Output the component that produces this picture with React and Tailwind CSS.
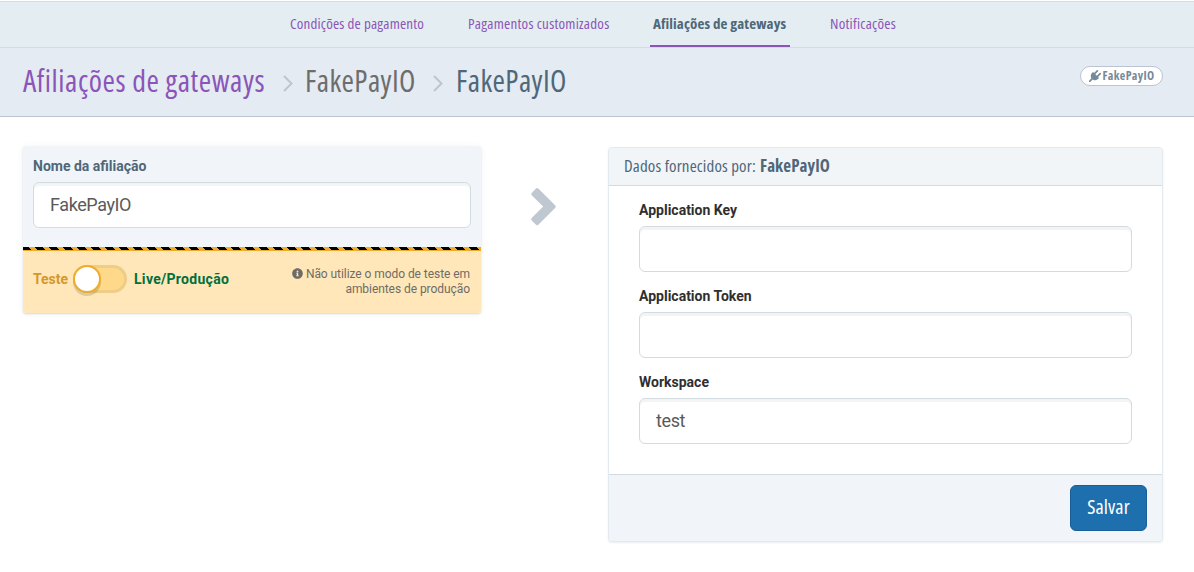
import { FaInfoCircle } from 'react-icons/fa';

const tabs = [
  { label: 'Condições de pagamento', width: 'w-[140px]', spacing: 'tracking-[0.18px]' },
  { label: 'Pagamentos customizados', width: 'w-[147px]', spacing: 'tracking-[0.25px]' },
  { label: 'Afiliações de gateways', width: 'w-[140px]', spacing: 'tracking-[0.11px]', active: true },
  { label: 'Notificações', width: '-ml-px w-[72px]', spacing: 'tracking-[0.25px]' },
];

function Tabs() {
  return (
    <nav className="flex h-[47px] justify-center gap-[38px] border-y border-[#d3dcdf] bg-[#e4edf1] pr-[8px] text-[15px] leading-[42px]">
      {tabs.map((tab) => (
        <a
          key={tab.label}
          className={`${tab.width} ${tab.spacing} h-[45px] whitespace-nowrap px-[3px] ${
            tab.active ? 'border-b-2 border-[#8b55b8] font-bold text-[#4f6778]' : 'text-[#8b55b8]'
          }`}
        >
          {tab.label}
        </a>
      ))}
    </nav>
  );
}

function Separator() {
  return (
    <svg className="mt-[2px] h-[17px] w-[10px]" viewBox="0 0 10 17" fill="none" stroke="#bcc6d0" strokeWidth="2">
      <path d="M1 1l7.500 7.500L1 16" />
    </svg>
  );
}

function Plug() {
  return (
    <svg className="size-[12px]" viewBox="0 0 1792 1792" fill="currentColor">
      <path d="M1755 453q37 38 37 90.500t-37 90.500l-401 400 150 150-160 160q-163 163-389.500 186.500t-411.500-100.500l-362 362h-181v-181l362-362q-124-185-100.500-411.500t186.500-389.500l160-160 150 150 400-401q38-37 91-37t90 37 37 90.500-37 90.500l-400 401 234 234 401-400q38-37 91-37t90 37z" />
    </svg>
  );
}

function Header() {
  return (
    <header className="flex h-[69px] justify-between border-b border-[#bac4d2] bg-[#e4ebf2] pl-[23px] pr-[31px]">
      <h1 className="flex h-[68px] items-center whitespace-nowrap text-[30px]">
        <span className="w-[260px] pb-[3px] tracking-[0.55px] text-[#8b55b8]">Afiliações de gateways</span>
        <Separator />
        <span className="ml-[12px] w-[128px] pb-[3px] tracking-[0.4px] text-[#6d6d6d]">FakePayIO</span>
        <Separator />
        <span className="ml-[13px] pb-[3px] tracking-[0.4px] text-[#4f6778]">FakePayIO</span>
      </h1>
      <span className="mt-[18px] flex h-5 w-[83px] items-center justify-center gap-[2px] rounded-full border border-[#bac4d2] bg-white text-[12px] font-bold tracking-[0.35px] text-[#76899a]">
        <Plug />
        <span className="pb-px">FakePayIO</span>
      </span>
    </header>
  );
}

function Input({ value }) {
  return (
    <input
      className="block h-[46px] w-full rounded-[6px] border border-[#d2dbe0] bg-white px-4 pb-[2px] font-[Roboto,sans-serif] text-[18px] tracking-[-0.4px] text-[#5a5a5a] shadow-[inset_0_3px_0_#f3f4f5] outline-none font-stretch-normal"
      defaultValue={value}
    />
  );
}

function AffiliationCard() {
  return (
    <section className="h-[167px] w-[458px] overflow-hidden rounded-[3px] bg-[#f1f5f9] font-[Roboto,sans-serif] shadow-[0_1px_2px_rgba(70,100,120,0.22),0_1px_10px_rgba(0,0,0,0.04)] font-stretch-normal">
      <div className="h-[101px] px-[10px] pt-[10px]">
        <label className="block h-[26px] text-[14px] font-bold leading-5 text-[#4f6778]">Nome da afiliação</label>
        <Input value="FakePayIO" />
      </div>
      <div className="h-1 border-b border-[#f0ab2b] bg-[repeating-linear-gradient(45deg,#000_0_5.8px,#f0ab2b_5.8px_9.9px)]" />
      <div className="flex h-[62px] justify-between bg-[#ffe7ba] pl-[10px] pr-[11px]">
        <div className="flex h-14 items-center text-[14px] font-bold">
          <span className="w-[40px] text-[#d6982b]">Teste</span>
          <span className="flex h-[28px] w-[54px] rounded-full bg-[#ffd98a] shadow-[inset_0_0_0_3px_rgba(120,120,120,0.13)]">
            <span className="size-[28px] rounded-full border-2 border-[#f0ab2b] bg-white shadow-[0_3px_0_rgba(120,110,80,0.25)]" />
          </span>
          <span className="ml-[7px] tracking-[0.3px] text-[#00703c]">Live/Produção</span>
        </div>
        <p className="pt-[16px] text-right text-[12px] leading-[15px] tracking-[-0.06px] text-[#6f6c66]">
          <FaInfoCircle className="mr-[3px] inline size-[11px] align-[-1px]" />
          Não utilize o modo de teste em
          <br />
          ambientes de produção
        </p>
      </div>
    </section>
  );
}

function Field({ label, value }) {
  return (
    <div className="h-[86px]">
      <label className="block h-[26px] font-[Roboto,sans-serif] text-[14px] font-bold leading-5 text-[#2f2f2f] font-stretch-normal">{label}</label>
      <Input value={value} />
    </div>
  );
}

function ProviderCard() {
  return (
    <section className="h-[395px] w-[555px] overflow-hidden rounded-[4px] border border-[#e2eaef] bg-white shadow-[0_1px_2px_rgba(70,100,120,0.12)]">
      <h2 className="flex h-[38px] items-center border-b border-[#d2dbe0] bg-[#f1f5f8] pb-px pl-[15px] text-[17px] text-[#4f6778]">
        <span className="w-[136px] whitespace-nowrap tracking-[0.14px]">Dados fornecidos por:</span>
        <b className="tracking-[0.1px]">FakePayIO</b>
      </h2>
      <div className="h-[288px] px-[30px] pt-[14px]">
        <Field label="Application Key" />
        <Field label="Application Token" />
        <Field label="Workspace" value="test" />
      </div>
      <footer className="flex h-[67px] justify-end border-t border-[#d2dbe0] bg-[#f1f5f9] pr-[15px] pt-[10px]">
        <button className="h-[46px] w-[77px] rounded-[6px] border border-[#185f99] bg-[#1d6fae] pb-[2px] text-[20px] tracking-[0.1px] text-white">Salvar</button>
      </footer>
    </section>
  );
}

export default function App() {
  return (
    <div className="h-[572px] overflow-hidden bg-white pt-px font-['Open_Sans',sans-serif] font-stretch-75%">
      <Tabs />
      <Header />
      <main className="flex items-start pl-[23px]">
        <div className="mt-[29px]">
          <AffiliationCard />
        </div>
        <svg className="ml-[49px] mt-[70px] h-[39px] w-[27px]" viewBox="0 0 27 39" fill="#bfc7d1">
          <path d="M1.7 8.200a1.600 1.600 0 0 1 0-2.200L6 1.500a1.600 1.600 0 0 1 2.300 0l17 17a1.600 1.600 0 0 1 0 2.200L8.300 37.700a1.600 1.600 0 0 1-2.300 0l-4.300-4.300a1.600 1.600 0 0 1 0-2.300L13.200 19.600z" />
        </svg>
        <div className="ml-[51px] mt-[30px]">
          <ProviderCard />
        </div>
      </main>
    </div>
  );
}
